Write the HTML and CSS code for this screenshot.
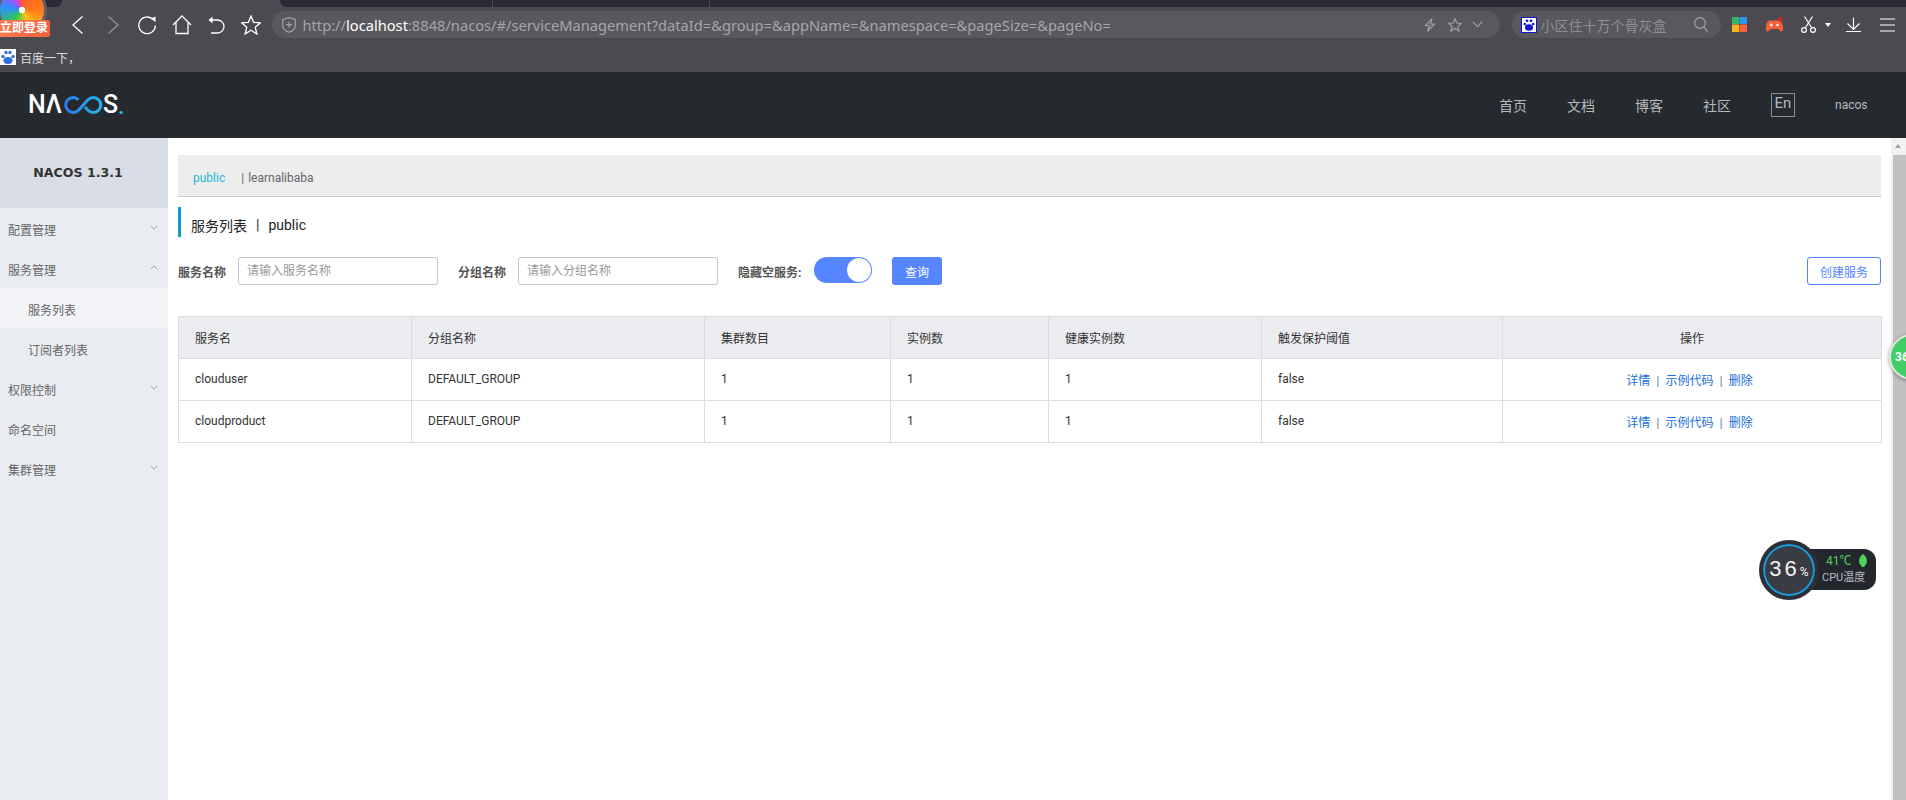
FILE: index.html
```html
<!DOCTYPE html>
<html lang="zh-CN">
<head>
<meta charset="utf-8">
<title>Nacos</title>
<link rel="stylesheet" href="styles.css">
</head>
<body>
<div class="chrome">
  <div class="tabstrip">
    <div class="tab-stub"></div>
    <div class="tab-seg first"></div>
    <div class="tab-seg second"></div>
    <div class="tab-seg rest"></div>
  </div>
  <div class="toolbar">
    <div class="nav-icons">
      <svg class="ico" viewBox="0 0 20 20"><path d="M14.500 1.500 5 10 14.500 18.500" class="wl"/></svg>
      <svg class="ico dim" viewBox="0 0 20 20"><path d="M5.500 1.500 15 10 5.500 18.500" class="wl"/></svg>
      <svg class="ico" viewBox="0 0 20 20"><path d="M15.500 4A8.300 8.300 0 1 0 18.400 10.500" class="wl"/><path d="M13.500 3.500 18.500 1.500 18.500 7Z" class="wf"/></svg>
      <svg class="ico" viewBox="0 0 20 20"><path d="M1 10 10 1 19 10M4 7.500V18.500H16V7.500" class="wl"/></svg>
      <svg class="ico" viewBox="0 0 20 20"><path d="M6 5H11.500A6.500 6.500 0 0 1 11.500 18H5" class="wl"/><path d="M6.500 1.500 2.500 5 6.500 8.500Z" class="wf"/></svg>
      <svg class="ico" viewBox="0 0 20 20"><path d="M10 1 12.600 7.300 19.500 7.800 14.200 12.200 15.900 19 10 15.300 4.100 19 5.800 12.200 .5 7.800 7.400 7.300Z" class="wl"/></svg>
    </div>
    <div class="urlbar">
      <svg class="shield" viewBox="0 0 14 16"><path d="M7 .7 13.300 2.500V8.500C13.300 12 10 14.300 7 15.300 4 14.300 .7 12 .7 8.500V2.500ZM4 7.700H10M7 4.700V10.700" class="gl"/></svg>
      <span class="url"><span class="url-dim">http://</span><span class="url-host">localhost</span><span class="url-dim">:8848/nacos/#/serviceManagement?dataId=&amp;group=&amp;appName=&amp;namespace=&amp;pageSize=&amp;pageNo=</span></span>
      <span class="url-icons">
        <svg class="bolt" viewBox="0 0 12 14"><path d="M8 .7 1.500 7.500H5.500L3.500 13.300 10.500 6H6.500Z" class="gl"/></svg>
        <svg class="ustar" viewBox="0 0 14 14"><path d="M7 .8 8.800 5 13.300 5.400 9.900 8.400 11 13 7 10.500 3 13 4.100 8.400 .7 5.400 5.200 5Z" class="gl"/></svg>
        <svg class="uchev" viewBox="0 0 11 7"><path d="M.7 .7 5.500 5.700 10.300 .7" class="gl"/></svg>
      </span>
    </div>
    <div class="searchbar">
      <svg class="paw" viewBox="0 0 16 16"><rect x=".5" y=".5" width="15" height="15" fill="#fff" stroke="#1414d2"/><ellipse cx="8" cy="10.500" rx="4" ry="3.200" fill="#1414d2"/><circle cx="3.800" cy="7" r="1.300" fill="#1414d2"/><circle cx="12.200" cy="7" r="1.300" fill="#1414d2"/><circle cx="6" cy="3.800" r="1.400" fill="#1414d2"/><circle cx="10" cy="3.800" r="1.400" fill="#1414d2"/></svg>
      <span class="search-text">小区住十万个骨灰盒</span>
      <svg class="glass" viewBox="0 0 14 15"><circle cx="6" cy="6" r="5.300" class="gl"/><path d="M9.800 10 13.500 14.500" class="gl"/></svg>
    </div>
    <div class="tool-icons">
      <svg class="tile" viewBox="0 0 15 15"><rect width="7" height="7" fill="#2fb964"/><rect x="7.500" width="7.500" height="7" fill="#2f96ee"/><rect y="7.500" width="7" height="7.500" fill="#fcb21c"/><rect x="7.500" y="7.500" width="7.500" height="7.500" fill="#f9623a"/></svg>
      <svg class="game" viewBox="0 0 19 16"><path d="M4.500 3.500H14C16.500 3.500 18.500 8.500 18 12.500 17.500 15.500 15 15 13.500 12H5.500C4 15 1.500 15.500 1 12.500 .5 8.500 2 3.500 4.500 3.500Z" fill="#f4603a"/><path d="M4.500 8H8M6.250 6.300V9.700" stroke="#fff"/><circle cx="12.500" cy="8" r="1.200" fill="#fff"/><circle cx="15.500" cy="2.200" r="2.200" fill="#e01c1c"/></svg>
      <svg class="cut" viewBox="0 0 15 17"><path d="M3.500 .5 10.500 11.500M11.500 .5 4.500 11.500" class="wl thin"/><circle cx="3" cy="14" r="2.400" class="wl thin"/><circle cx="12" cy="14" r="2.400" class="wl thin"/></svg>
      <span class="caret"></span>
      <svg class="dl" viewBox="0 0 15 15"><path d="M7.500 .5V12.500M1.500 6.500 7.500 12.500 13.500 6.500M0 14.500H15" class="wl thin"/></svg>
      <svg class="menu" viewBox="0 0 15 14"><path d="M0 1H15M0 7H15M0 13H15" class="wl thin"/></svg>
    </div>
  </div>
  <div class="bookmarks">
    <svg class="baidu" viewBox="0 0 16 16"><rect width="16" height="16" fill="#fff"/><ellipse cx="8" cy="11.500" rx="4.500" ry="3.500" fill="#2f6fe0"/><circle cx="3" cy="7.500" r="1.700" fill="#2f6fe0"/><circle cx="13" cy="7.500" r="1.700" fill="#2f6fe0"/><circle cx="6" cy="3.500" r="1.700" fill="#2f6fe0"/><circle cx="10" cy="3.500" r="1.700" fill="#2f6fe0"/></svg>
    <span class="bm-text">百度一下，</span>
  </div>
</div>

<header class="topnav">
  <div class="logo">
    <span class="logo-w">NΛ</span>
    <svg class="logo-loop" viewBox="0 0 41 18"><defs><linearGradient id="lg" x1="0" x2="1"><stop offset="0" stop-color="#2f7bf2"/><stop offset="1" stop-color="#25b4ee"/></linearGradient></defs><path d="M15.500 3.700A7.500 7.500 0 1 0 15.500 14.300L25 3.700A7.500 7.500 0 1 1 25 14.300L22 11" fill="none" stroke="url(#lg)" stroke-width="3"/></svg>
    <span class="logo-w">S</span><span class="logo-dot">.</span>
  </div>
  <nav class="topmenu">
    <a>首页</a><a>文档</a><a>博客</a><a>社区</a>
    <span class="lang">En</span>
    <span class="user">nacos</span>
  </nav>
</header>

<div class="workspace">
  <aside class="sidebar">
    <div class="side-head">NACOS 1.3.1</div>
    <div class="side-item">配置管理<svg class="chev" viewBox="0 0 10 6"><path d="M1 1 5 5 9 1"/></svg></div>
    <div class="side-item">服务管理<svg class="chev" viewBox="0 0 10 6"><path d="M1 5 5 1 9 5"/></svg></div>
    <div class="side-item sub active">服务列表</div>
    <div class="side-item sub">订阅者列表</div>
    <div class="side-item">权限控制<svg class="chev" viewBox="0 0 10 6"><path d="M1 1 5 5 9 1"/></svg></div>
    <div class="side-item">命名空间</div>
    <div class="side-item">集群管理<svg class="chev" viewBox="0 0 10 6"><path d="M1 1 5 5 9 1"/></svg></div>
  </aside>

  <main class="content">
    <div class="ns-bar"><span class="ns-on">public</span><span class="ns-pipe">|</span><span class="ns-off">learnalibaba</span></div>
    <h1 class="page-title"><span>服务列表</span><span class="title-sep">|</span><span>public</span></h1>
    <div class="filters">
      <label class="f-label">服务名称</label>
      <div class="f-input">请输入服务名称</div>
      <label class="f-label second">分组名称</label>
      <div class="f-input">请输入分组名称</div>
      <label class="f-label third">隐藏空服务:</label>
      <div class="switch"><span class="knob"></span></div>
      <button class="btn primary">查询</button>
      <button class="btn outline">创建服务</button>
    </div>
    <table class="grid">
      <colgroup><col class="c1"><col class="c2"><col class="c3"><col class="c4"><col class="c5"><col class="c6"><col class="c7"></colgroup>
      <thead>
        <tr><th>服务名</th><th>分组名称</th><th>集群数目</th><th>实例数</th><th>健康实例数</th><th>触发保护阈值</th><th class="center">操作</th></tr>
      </thead>
      <tbody>
        <tr><td>clouduser</td><td>DEFAULT_GROUP</td><td>1</td><td>1</td><td>1</td><td>false</td><td class="center actions"><a>详情</a><i>|</i><a>示例代码</a><i>|</i><a>删除</a></td></tr>
        <tr><td>cloudproduct</td><td>DEFAULT_GROUP</td><td>1</td><td>1</td><td>1</td><td>false</td><td class="center actions"><a>详情</a><i>|</i><a>示例代码</a><i>|</i><a>删除</a></td></tr>
      </tbody>
    </table>
  </main>

  <div class="scrollbar"><span class="sb-arrow"></span><div class="sb-thumb"></div></div>
</div>

<div class="login-badge">
  <div class="pinwheel"></div>
  <div class="login-text">立即登录</div>
</div>
<div class="ball">36</div>
<div class="cpu">
  <div class="cpu-pill"><div class="cpu-temp">41℃<svg class="leaf" viewBox="0 0 10 14"><path d="M5 0C9 3 11 8 6 13H4C-1 8 1 3 5 0Z" fill="#4fd25c"/></svg></div><div class="cpu-label">CPU温度</div></div>
  <div class="cpu-dial"><span class="cpu-num">36</span><span class="cpu-pct">%</span></div>
</div>
</body>
</html>
```

FILE: styles.css
```css
* { box-sizing: border-box; }
html, body { margin: 0; height: 800px; overflow: hidden; background: #fff; }
body { font-family: Roboto, "Noto Sans CJK SC", sans-serif; font-size: 12px; color: #333; position: relative; }

.chrome { height: 72px; background: #4a4a50; }
.tabstrip { height: 7px; display: flex; }
.tab-stub { width: 62px; background: #2a2a36; border-radius: 0 0 6px 0; }
.tab-seg { background: #2a2a36; }
.tab-seg.first { width: 213px; margin-left: 218px; border-radius: 0 0 0 6px; border-right: 1px solid #4a4a50; }
.tab-seg.second { width: 217px; border-right: 1px solid #4a4a50; }
.tab-seg.rest { flex: 1; }

.toolbar { height: 35px; display: flex; align-items: center; }
.nav-icons { display: flex; align-items: center; gap: 14.500px; padding-left: 68px; flex: none; }
.ico { width: 20px; height: 20px; flex: none; }
.ico.dim { opacity: .4; }
.wl { fill: none; stroke: #fff; stroke-width: 1.300; }
.wl.thin { stroke-width: 1.200; }
.wf { fill: #fff; }
.gl { fill: none; stroke: #a2a2a6; stroke-width: 1.200; }

.urlbar { width: 1228px; margin-left: 11px; height: 27px; background: #58585d; border-radius: 14px; display: flex; align-items: center; padding: 0 17px 0 10px; flex: none; }
.shield { width: 14px; height: 16px; flex: none; }
.url { margin-left: 7px; font-family: "Noto Sans", sans-serif; font-size: 14.670px; white-space: nowrap; }
.url-dim { color: #a6a6aa; }
.url-host { color: #fff; }
.url-icons { margin-left: auto; display: flex; align-items: center; }
.bolt { width: 12px; height: 14px; }
.ustar { width: 14px; height: 14px; margin-left: 12px; }
.uchev { width: 11px; height: 7px; margin-left: 10px; }

.searchbar { width: 209px; height: 27px; margin-left: 12px; background: #58585d; border-radius: 14px; display: flex; align-items: center; padding: 0 13px 0 9px; flex: none; }
.paw { width: 16px; height: 16px; flex: none; }
.search-text { margin-left: 4px; font-size: 14px; color: #8f8f93; white-space: nowrap; flex: 1; }
.glass { width: 14px; height: 15px; flex: none; }

.tool-icons { display: flex; align-items: center; margin-left: 11px; }
.tile { width: 15px; height: 15px; }
.game { width: 19px; height: 16px; margin-left: 18px; }
.cut { width: 15px; height: 17px; margin-left: 17px; }
.caret { width: 0; height: 0; border: 3px solid transparent; border-top: 4px solid #fff; border-bottom: 0; margin: 0 0 0 9px; }
.dl { width: 15px; height: 15px; margin-left: 15px; }
.menu { width: 15px; height: 14px; margin-left: 19px; }

.bookmarks { height: 30px; display: flex; align-items: center; }
.baidu { width: 16px; height: 16px; flex: none; }
.bm-text { margin-left: 4px; color: #ddd; font-size: 12px; }

.topnav { height: 66px; background: #252a2f; display: flex; align-items: center; justify-content: space-between; }
.logo { display: flex; align-items: center; margin-left: 28px; height: 20px; }
.logo-w { font-family: Roboto, sans-serif; font-weight: 500; font-size: 25px; color: #fff; line-height: 20px; }
.logo-loop { width: 41px; height: 18px; margin: 0 -1px 0 1px; flex: none; }
.logo-dot { font-family: Roboto, sans-serif; font-weight: 700; font-size: 20px; line-height: 20px; color: #1cc3df; margin-top: 4px; }
.topmenu { display: flex; align-items: center; padding-right: 38px; color: #b6babe; font-size: 14px; }
.topmenu a { width: 28px; margin-right: 40px; white-space: nowrap; }
.lang { width: 24px; height: 24px; border: 1px solid #8a8f94; font-size: 15px; line-height: 19px; text-align: center; }
.user { font-size: 12px; width: 33px; margin-left: 40px; white-space: nowrap; }

.workspace { height: 662px; display: flex; }
.sidebar { width: 168px; flex: none; background: #e9ecf1; color: #6b6f75; }
.side-head { height: 70px; background: #d9dee6; color: #333; font-family: "DejaVu Sans", sans-serif; font-weight: 700; font-size: 12.600px; text-align: center; line-height: 70px; padding-right: 12px; }
.side-item { height: 40px; padding: 3px 0 0 8px; display: flex; align-items: center; position: relative; color: #666; }
.side-item.sub { padding-left: 28px; }
.side-item.active { background: #f2f4f7; }
.chev { width: 8px; height: 5px; position: absolute; right: 10px; top: 17px; fill: none; stroke: #8a8f96; stroke-width: 1; }

.content { flex: 1; padding: 17px 10px 0 10px; min-width: 0; }
.ns-bar { height: 42px; background: #ededee; border-bottom: 1px solid #c9cacc; padding: 14px 0 0 15px; line-height: 18px; display: flex; }
.ns-on { color: #24b6d8; margin-right: 16px; }
.ns-pipe { color: #666; margin-right: 4px; }
.ns-off { color: #666; }
.page-title { margin: 10px 0 0; height: 30px; border-left: 3px solid #0f9ccd; padding: 5px 0 0 10px; font-weight: 400; font-size: 14px; color: #222; display: flex; align-items: center; gap: 9px; }
.filters { margin-top: 20px; height: 28px; display: flex; align-items: center; }
.f-label { font-weight: 700; color: #555; width: 60px; flex: none; }
.f-label.second { margin-left: 20px; }
.f-label.third { margin-left: 20px; width: 76px; }
.f-input { width: 200px; height: 28px; border: 1px solid #c4c6cf; border-radius: 3px; padding-left: 8px; line-height: 26px; color: #999; flex: none; }
.switch { width: 58px; height: 26px; background: #5585ff; border-radius: 13px; position: relative; margin-right: 20px; margin-top: -2px; flex: none; }
.knob { position: absolute; right: 1px; top: 1px; width: 24px; height: 24px; border-radius: 50%; background: #fff; }
.btn { height: 28px; border-radius: 3px; font: inherit; padding: 0; flex: none; }
.btn.primary { width: 50px; background: #5585ff; color: #fff; border: 0; }
.btn.outline { width: 74px; margin-left: auto; background: #fff; color: #5585ff; border: 1px solid #5585ff; }
.grid { margin-top: 31px; width: 100%; table-layout: fixed; border-collapse: collapse; border: 1px solid #dcdde2; }
.c1 { width: 233px; } .c2 { width: 293px; } .c3 { width: 186px; } .c4 { width: 158px; } .c5 { width: 213px; } .c6 { width: 241px; } .c7 { width: 379px; }
.grid th, .grid td { height: 42px; border: 1px solid #dcdde2; padding: 0 16px 1px; text-align: left; font-weight: 400; color: #333; white-space: nowrap; }
.grid th { background: #ebecf0; }
.grid .center { text-align: center; }
.grid .actions { padding-right: 21px; }
.grid a { color: #1a6fd8; }
.grid i { font-style: normal; font-size: 13px; margin: 0 6px; color: #6a7fa8; }

.scrollbar { width: 15px; flex: none; background: #f1f1f1; padding-left: 2px; position: relative; display: flex; flex-direction: column; }
.sb-arrow { display: block; height: 17px; position: relative; }
.sb-arrow::after { content: ""; position: absolute; left: 2px; top: 6px; border: 3.500px solid transparent; border-bottom: 4px solid #a0a0a0; border-top: 0; }
.sb-thumb { flex: 1; background: #c1c1c1; }

.login-badge { position: absolute; left: 0; top: 0; width: 50px; height: 38px; }
.pinwheel { position: absolute; left: -3px; top: -15px; width: 50px; height: 50px; border-radius: 50%; background: radial-gradient(circle at 50% 50%, #fff 0 3px, transparent 3.500px), conic-gradient(#ff5a2a, #ff7a1c 90deg, #ffc31c 150deg, #2fc94a 220deg, #2f8fff 280deg, #a050ff 320deg, #ff4080 350deg, #ff5a2a); border: 3px solid #5f5f64; }
.login-text { position: absolute; left: 0; top: 20px; width: 50px; height: 17px; background: linear-gradient(90deg, #ff7a50, #f0603a); color: #fff; font-weight: 700; font-size: 12px; line-height: 17px; white-space: nowrap; border-radius: 0 2px 2px 0; }

.ball { position: absolute; left: 1889px; top: 334px; width: 46px; height: 46px; border-radius: 50%; background: #43cd66; border: 2px solid #dfe8df; box-shadow: 0 1px 4px rgba(0,0,0,.4); color: #fff; font-weight: 700; font-size: 12px; line-height: 42px; padding-left: 4px; white-space: nowrap; }
.cpu { position: absolute; left: 1759px; top: 540px; width: 120px; height: 60px; }
.cpu-pill { position: absolute; left: 30px; top: 9px; width: 87px; height: 41px; background: #24272e; border-radius: 0 12px 12px 0; padding: 3px 0 0 33px; }
.cpu-temp { color: #4fd25c; font-size: 12px; line-height: 18px; display: flex; align-items: center; gap: 6px; padding-left: 4px; }
.leaf { width: 10px; height: 14px; }
.cpu-label { color: #b8bcc2; font-size: 11px; line-height: 16px; white-space: nowrap; }
.cpu-dial { position: absolute; left: 0; top: 0; width: 60px; height: 60px; border-radius: 50%; background: #3a3c44; border: 4px solid #2d2f37; box-shadow: inset 0 0 0 2px #159fe0; color: #f2f2f2; display: flex; align-items: baseline; justify-content: center; padding-top: 12px; }
.cpu-num { font-size: 22px; line-height: 26px; letter-spacing: 3px; font-family: "Liberation Sans", sans-serif; }
.cpu-pct { font-size: 12px; }
```
